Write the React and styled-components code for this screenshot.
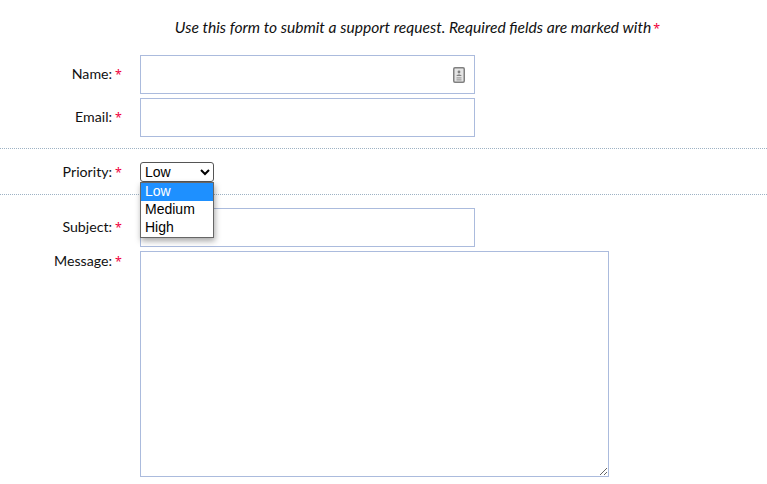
import React from "react";
import styled, { createGlobalStyle } from "styled-components";

const GlobalStyle = createGlobalStyle`
  html, body {
    margin: 0;
    padding: 0;
    background: #fff;
    overflow: hidden;
  }
  body {
    font-family: Lato, "Noto Sans", sans-serif;
    font-size: 14.2px;
    color: #111;
  }
`;

const Form = styled.form`
  display: flex;
  flex-direction: column;
  padding-top: 18px;
`;

const Intro = styled.p`
  margin: 0 0 18px;
  height: 19px;
  line-height: 19px;
  padding-left: 68px;
  text-align: center;
  font-style: italic;
  font-size: 15.6px;
`;

const Star = styled.span`
  color: #f0003c;
  font-family: "Noto Sans", sans-serif;
  font-size: 12.5px;
  font-style: normal;
  line-height: 1;
  margin-left: ${(p) => (p.$tight ? "2px" : "3px")};
`;

const Group = styled.div`
  display: flex;
  flex-direction: column;
  gap: 4px;
`;

const PrioritySection = styled.div`
  display: flex;
  align-items: center;
  height: 45px;
  border-top: 1px dotted #9db2c4;
  border-bottom: 1px dotted #9db2c4;
  margin: 11px 0 13px;
`;

const Row = styled.div`
  display: flex;
  align-items: ${(p) => (p.$top ? "flex-start" : "center")};
`;

const Label = styled.label`
  width: 122px;
  margin-right: 18px;
  flex: none;
  text-align: right;
  white-space: nowrap;
  line-height: 19px;
  position: relative;
  top: ${(p) => (p.$top ? "0" : "-1px")};
`;

const InputWrap = styled.div`
  position: relative;
  width: 335px;
  height: 39px;
`;

const TextInput = styled.input`
  box-sizing: border-box;
  display: block;
  width: 100%;
  height: 100%;
  padding: 0 8px;
  border: 1px solid #abbbdd;
  border-radius: 0;
  background: #fff;
  outline: none;
`;

const ContactIcon = styled.svg`
  position: absolute;
  top: 12px;
  right: 10px;
  width: 12px;
  height: 16px;
`;

const SelectWrap = styled.div`
  position: relative;
  width: 74px;
  height: 20px;
`;

const Select = styled.select`
  box-sizing: border-box;
  display: block;
  width: 74px;
  height: 20px;
  margin: 0;
  padding: 0;
  border: 1px solid #555;
  border-radius: 3px;
  background: #fff;
  color: #000;
  font-family: "Liberation Sans", Arial, sans-serif;
  font-size: 14px;
`;

const Options = styled.ul`
  position: absolute;
  z-index: 2;
  top: 20px;
  left: 0;
  box-sizing: border-box;
  width: 74px;
  margin: 0;
  padding: 0;
  list-style: none;
  background: #fff;
  border: 1px solid #666;
  box-shadow: 1px 3px 6px rgba(0, 0, 0, 0.35);
  font-family: "Liberation Sans", Arial, sans-serif;
  font-size: 14px;
`;

const Option = styled.li`
  height: 18px;
  line-height: 17px;
  padding-left: 4px;
  background: ${(p) => (p.$active ? "#1e90ff" : "#fff")};
  color: ${(p) => (p.$active ? "#fff" : "#000")};
`;

const TextArea = styled.textarea`
  box-sizing: border-box;
  display: block;
  width: 469px;
  height: 226px;
  margin: 0;
  padding: 8px;
  border: 1px solid #abbbdd;
  border-radius: 0;
  background: #fff;
  outline: none;
  resize: both;
`;

const App = () => {
  return (
    <>
      <GlobalStyle />
      <Form>
        <Intro>
          Use this form to submit a support request. Required fields are marked with
          <Star $tight>*</Star>
        </Intro>

        <Group>
          <Row>
            <Label>
              Name:<Star>*</Star>
            </Label>
            <InputWrap>
              <TextInput type="text" />
              <ContactIcon viewBox="0 0 12 16">
                <rect x="0.75" y="0.75" width="10.5" height="14.5" rx="1.2" fill="#e4e4e4" stroke="#808080" strokeWidth="1.5" />
                <circle cx="6" cy="5" r="1.4" fill="#808080" />
                <path d="M3.5 9 C3.5 7 8.5 7 8.5 9 Z" fill="#808080" />
                <path d="M3.5 10.8 H8.5 M3.5 12.8 H8.5" stroke="#a0a0a0" strokeWidth="1.2" />
              </ContactIcon>
            </InputWrap>
          </Row>
          <Row>
            <Label>
              Email:<Star>*</Star>
            </Label>
            <InputWrap>
              <TextInput type="text" />
            </InputWrap>
          </Row>
        </Group>

        <PrioritySection>
          <Row>
            <Label $top>
              Priority:<Star>*</Star>
            </Label>
            <SelectWrap>
              <Select defaultValue="Low">
                <option>Low</option>
                <option>Medium</option>
                <option>High</option>
              </Select>
              <Options>
                <Option $active>Low</Option>
                <Option>Medium</Option>
                <Option>High</Option>
              </Options>
            </SelectWrap>
          </Row>
        </PrioritySection>

        <Group>
          <Row>
            <Label>
              Subject:<Star>*</Star>
            </Label>
            <InputWrap>
              <TextInput type="text" />
            </InputWrap>
          </Row>
          <Row $top>
            <Label $top>
              Message:<Star>*</Star>
            </Label>
            <TextArea />
          </Row>
        </Group>
      </Form>
    </>
  );
};

export default App;
